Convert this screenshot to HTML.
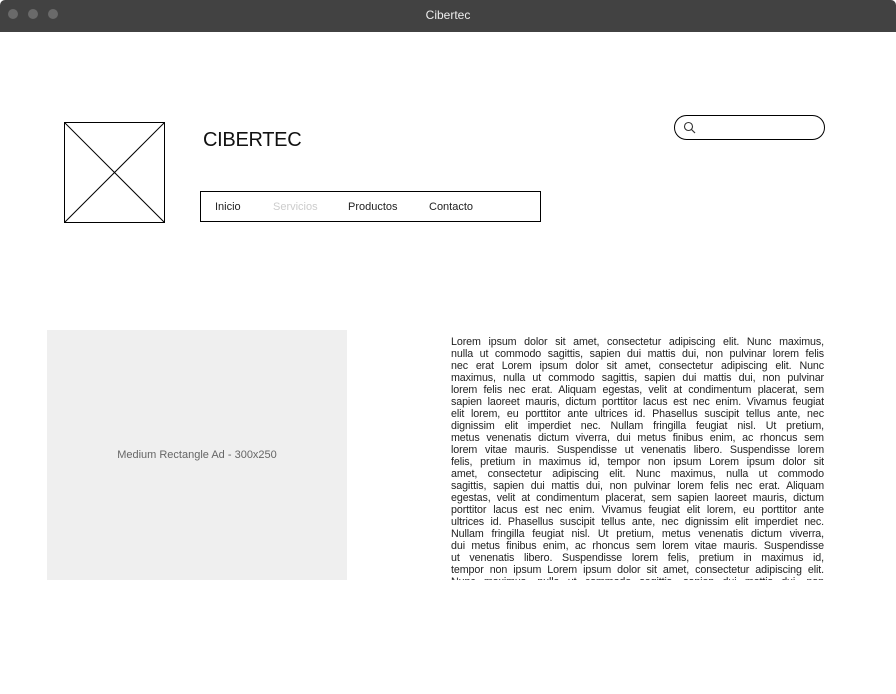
<!DOCTYPE html>
<html><head><meta charset="utf-8"><style>
*{margin:0;padding:0;box-sizing:border-box}
body{width:896px;height:694px;background:#fff;position:relative;overflow:hidden;font-family:"Liberation Sans",sans-serif;color:#222}
.bar{position:absolute;left:0;top:0;width:896px;height:32px;background:#424242;border-radius:5px 5px 0 0}
.dot{position:absolute;top:9px;width:10px;height:10px;border-radius:50%;background:#6a6a6a}
.title{position:absolute;left:0;width:896px;top:8px;text-align:center;color:#eee;font-size:12px}
.txt{position:absolute;left:451px;top:336px;width:373px;height:244px;overflow:hidden;font-size:10.7px;letter-spacing:-0.1px;line-height:12px;color:#222}
.txt div{text-align:justify;text-align-last:justify;white-space:nowrap;overflow:hidden}
</style></head><body>
<div class="bar"><div class="dot" style="left:8px"></div><div class="dot" style="left:28px"></div><div class="dot" style="left:48px"></div><div class="title">Cibertec</div></div>
<svg style="position:absolute;left:64px;top:122px" width="101" height="101"><rect x="0.5" y="0.5" width="100" height="100" fill="none" stroke="#000"/><line x1="0" y1="0" x2="101" y2="101" stroke="#000"/><line x1="101" y1="0" x2="0" y2="101" stroke="#000"/></svg>
<div style="position:absolute;left:203px;top:129px;font-size:20px;letter-spacing:-0.3px;color:#111">CIBERTEC</div>
<div style="position:absolute;left:200px;top:191px;width:341px;height:31px;border:1px solid #000;font-size:11px">
<span style="position:absolute;left:14px;top:9px">Inicio</span>
<span style="position:absolute;left:72px;top:9px;color:#ccc">Servicios</span>
<span style="position:absolute;left:147px;top:9px">Productos</span>
<span style="position:absolute;left:228px;top:9px">Contacto</span>
</div>
<div style="position:absolute;left:674px;top:115px;width:151px;height:25px;border:1px solid #000;border-radius:13px"></div>
<svg style="position:absolute;left:683px;top:121px" width="13" height="13"><circle cx="5.5" cy="5.5" r="4" fill="none" stroke="#333" stroke-width="1.1"/><line x1="8.5" y1="8.5" x2="12" y2="12" stroke="#333" stroke-width="1.2"/></svg>
<div style="position:absolute;left:47px;top:330px;width:300px;height:250px;background:#efefef;color:#666;font-size:11px;text-align:center;line-height:250px">Medium Rectangle Ad - 300x250</div>
<div class="txt">
<div>Lorem ipsum dolor sit amet, consectetur adipiscing elit. Nunc maximus,</div>
<div>nulla ut commodo sagittis, sapien dui mattis dui, non pulvinar lorem felis</div>
<div>nec erat Lorem ipsum dolor sit amet, consectetur adipiscing elit. Nunc</div>
<div>maximus, nulla ut commodo sagittis, sapien dui mattis dui, non pulvinar</div>
<div>lorem felis nec erat. Aliquam egestas, velit at condimentum placerat, sem</div>
<div>sapien laoreet mauris, dictum porttitor lacus est nec enim. Vivamus feugiat</div>
<div>elit lorem, eu porttitor ante ultrices id. Phasellus suscipit tellus ante, nec</div>
<div>dignissim elit imperdiet nec. Nullam fringilla feugiat nisl. Ut pretium,</div>
<div>metus venenatis dictum viverra, dui metus finibus enim, ac rhoncus sem</div>
<div>lorem vitae mauris. Suspendisse ut venenatis libero. Suspendisse lorem</div>
<div>felis, pretium in maximus id, tempor non ipsum Lorem ipsum dolor sit</div>
<div>amet, consectetur adipiscing elit. Nunc maximus, nulla ut commodo</div>
<div>sagittis, sapien dui mattis dui, non pulvinar lorem felis nec erat. Aliquam</div>
<div>egestas, velit at condimentum placerat, sem sapien laoreet mauris, dictum</div>
<div>porttitor lacus est nec enim. Vivamus feugiat elit lorem, eu porttitor ante</div>
<div>ultrices id. Phasellus suscipit tellus ante, nec dignissim elit imperdiet nec.</div>
<div>Nullam fringilla feugiat nisl. Ut pretium, metus venenatis dictum viverra,</div>
<div>dui metus finibus enim, ac rhoncus sem lorem vitae mauris. Suspendisse</div>
<div>ut venenatis libero. Suspendisse lorem felis, pretium in maximus id,</div>
<div>tempor non ipsum Lorem ipsum dolor sit amet, consectetur adipiscing elit.</div>
<div>Nunc maximus, nulla ut commodo sagittis, sapien dui mattis dui, non</div>
</div>
</body></html>
